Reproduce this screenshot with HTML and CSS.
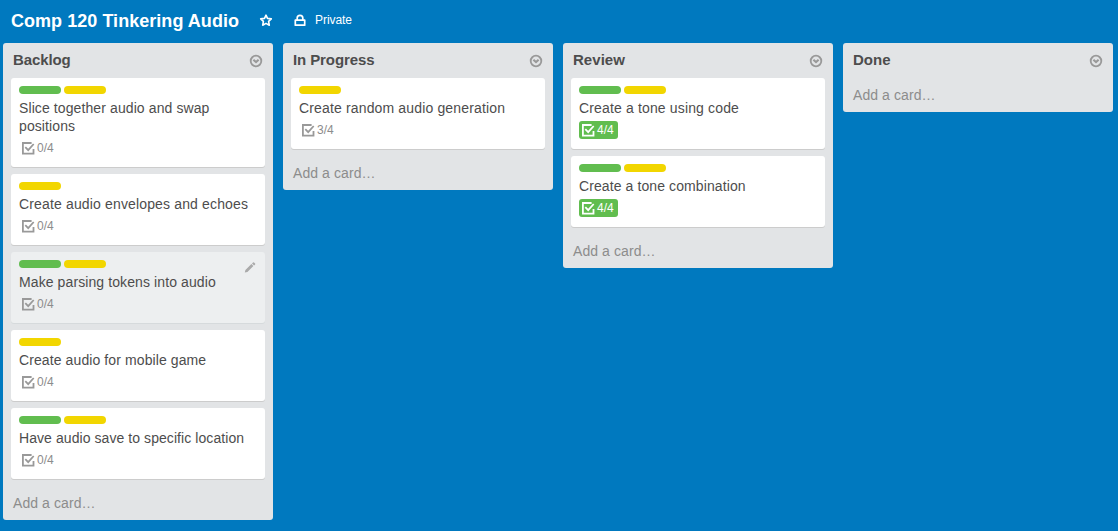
FILE: index.html
```html
<!DOCTYPE html>
<html lang="en"><head><meta charset="utf-8"><title>Comp 120 Tinkering Audio</title><link rel="stylesheet" href="styles.css"></head>
<body>
<svg class="defs" aria-hidden="true">
<symbol id="check" viewBox="0 0 14 14"><path d="M10.6 2H1.9v10.6h10.6V8M4.3 6.2l2.9 3 5.5-6.2" fill="none" stroke="currentColor" stroke-width="1.8"/></symbol>
<symbol id="menu" viewBox="0 0 14 14"><circle cx="7" cy="7" r="5.3" fill="none" stroke="currentColor" stroke-width="1.8"/><path d="M4.4 5.7L7 8.1l2.6-2.4" fill="none" stroke="currentColor" stroke-width="2"/></symbol>
</svg>
<header class="header"><h1 class="title">Comp 120 Tinkering Audio</h1>
<svg class="star" viewBox="0 0 14 14"><path d="M7 2.2l1.5 3.2 3.8.5-2.7 2.5.7 3.8L7 10.4l-3.3 1.8.7-3.8-2.7-2.5 3.8-.5z" fill="none" stroke="currentColor" stroke-width="1.6" stroke-linejoin="round"/></svg>
<svg class="lock" viewBox="0 0 14 14"><path d="M2.3 7.2h9.4v5H2.3zM4.2 6.8V5.1a2.8 2.8 0 0 1 5.6 0v1.7" fill="none" stroke="currentColor" stroke-width="1.7" stroke-linejoin="round"/></svg>
<span class="private">Private</span></header>
<main class="board">
<section class="list"><div class="list-head"><h2 class="snug">Backlog</h2><svg class="menu"><use href="#menu"/></svg></div>
<article class="card"><div class="labels"><i class="label green"></i><i class="label"></i></div><p>Slice together audio and swap positions</p><span class="badge"><svg><use href="#check"/></svg>0/4</span></article>
<article class="card"><div class="labels"><i class="label"></i></div><p class="wide">Create audio envelopes and echoes</p><span class="badge"><svg><use href="#check"/></svg>0/4</span></article>
<article class="card hover"><div class="labels"><i class="label green"></i><i class="label"></i></div><p>Make parsing tokens into audio</p><span class="badge"><svg><use href="#check"/></svg>0/4</span><svg class="pencil" viewBox="0 0 12 12"><path d="M.8 11.5l.6-2.6 6-5.8 2 2-6 5.8zM8 2.5l1-1q.5-.4 1 0l1.1 1.1q.4.5 0 1l-1 1z" fill="currentColor"/></svg></article>
<article class="card"><div class="labels"><i class="label"></i></div><p>Create audio for mobile game</p><span class="badge"><svg><use href="#check"/></svg>0/4</span></article>
<article class="card"><div class="labels"><i class="label green"></i><i class="label"></i></div><p class="narrow">Have audio save to specific location</p><span class="badge"><svg><use href="#check"/></svg>0/4</span></article>
<div class="add">Add a card…</div></section>
<section class="list"><div class="list-head"><h2 class="snug">In Progress</h2><svg class="menu"><use href="#menu"/></svg></div>
<article class="card"><div class="labels"><i class="label"></i></div><p class="wide">Create random audio generation</p><span class="badge"><svg><use href="#check"/></svg>3/4</span></article>
<div class="add">Add a card…</div></section>
<section class="list"><div class="list-head"><h2>Review</h2><svg class="menu"><use href="#menu"/></svg></div>
<article class="card"><div class="labels"><i class="label green"></i><i class="label"></i></div><p class="wide">Create a tone using code</p><span class="badge done"><svg><use href="#check"/></svg>4/4</span></article>
<article class="card"><div class="labels"><i class="label green"></i><i class="label"></i></div><p>Create a tone combination</p><span class="badge done"><svg><use href="#check"/></svg>4/4</span></article>
<div class="add">Add a card…</div></section>
<section class="list"><div class="list-head"><h2>Done</h2><svg class="menu"><use href="#menu"/></svg></div>
<div class="add">Add a card…</div></section>
</main></body></html>
```
FILE: styles.css
```css
* { box-sizing: border-box; }
body { margin: 0; height: 531px; overflow: hidden; background: #0079bf; color: #4d4d4d; font: 14px/18px "Liberation Sans", Arial, sans-serif; }
.defs { display: none; }
h1, h2, p { margin: 0; }
p { letter-spacing: .1px; }
.wide { letter-spacing: .15px; }
.narrow { letter-spacing: .07px; }
.header { display: flex; align-items: center; height: 43px; padding: 0 11px 3px; color: #fff; }
.title { padding-top: 2px; font-size: 18px; line-height: 24px; width: 228px; white-space: nowrap; letter-spacing: .04px; }
.star, .lock { width: 14px; height: 14px; margin-left: 20px; }
.private { font-size: 12px; margin-left: 8px; letter-spacing: -.05px; }
.board { display: flex; align-items: flex-start; gap: 10px; padding-left: 3px; }
.list { flex: 0 0 270px; background: #e2e4e6; border-radius: 3px; padding: 0 8px; }
.list-head { display: flex; justify-content: space-between; height: 35px; padding: 8px 2px 0; }
h2 { font-size: 15px; line-height: 18px; letter-spacing: .04px; }
.snug { letter-spacing: -.1px; }
.menu { width: 14px; height: 14px; margin-top: 3px; color: #999; }
.card { position: relative; width: 254px; min-height: 71px; margin-bottom: 7px; padding: 8px 8px 10px; background: #fff; border-radius: 3px; box-shadow: 0 1px 0 #ccc; }
.labels { display: flex; gap: 3px; height: 13px; }
.label { width: 42px; height: 8px; border-radius: 4px; background: #f2d600; }
.green { background: #61bd4f; }
.badge { display: flex; align-items: center; width: 39px; height: 18px; margin-top: 4px; padding-left: 2px; border-radius: 3px; color: #8c8c8c; font-size: 12px; }
.badge svg { width: 14px; height: 14px; margin-right: 2px; color: #999; }
.done { background: #61bd4f; color: #fff; }
.badge.done svg { color: #fff; }
.hover { background: #edeff0; box-shadow: 0 1px 0 #d6dadc; }
.pencil { position: absolute; top: 9px; right: 9px; width: 12px; height: 12px; color: #aaa; }
.add { height: 34px; padding: 8px 2px; color: #8c8c8c; letter-spacing: .08px; }
```
